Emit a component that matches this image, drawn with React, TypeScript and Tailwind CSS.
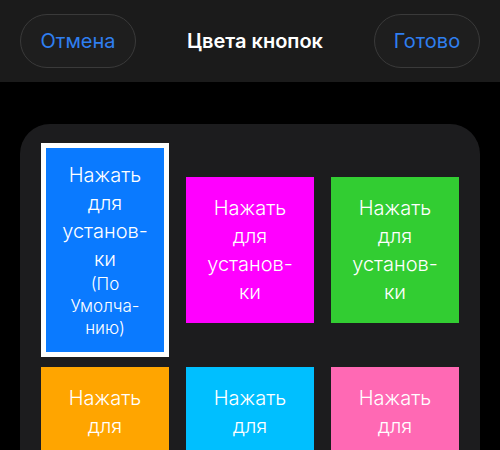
const tiles = [
  { color: 'bg-[#0a7aff]', selected: true },
  { color: 'bg-[#ff00ff]' },
  { color: 'bg-[#32cd32]' },
  { color: 'bg-[#ffa500]' },
  { color: 'bg-[#00bfff]' },
  { color: 'bg-[#ff69b4]' },
];

function Tile({ color, selected }: { color: string; selected?: boolean }) {
  return (
    <button
      className={`${color} ${
        selected ? 'h-[214px] border-[5px] border-white' : 'h-[146px]'
      } w-[128px] flex flex-col items-center justify-center text-white text-center`}
    >
      <span className="text-[20px] leading-[28px] font-light">Нажать</span>
      <span className="text-[20px] leading-[28px] font-light">для</span>
      <span className="text-[20px] leading-[28px] font-light">установ-</span>
      <span className="text-[20px] leading-[28px] font-light">ки</span>
      {selected && (
        <>
          <span className="text-[17px] leading-[22px] font-light">(По</span>
          <span className="text-[17px] leading-[22px] font-light">Умолча-</span>
          <span className="text-[17px] leading-[22px] font-light">нию)</span>
        </>
      )}
    </button>
  );
}

export default function App() {
  return (
    <div className="w-[500px] h-[450px] overflow-hidden bg-black font-['Inter','Noto_Sans',sans-serif]">
      {/* Nav bar */}
      <div className="h-[82px] bg-[#1b1b1b] flex items-center justify-between px-5">
        <button className="h-[54px] w-[116px] rounded-full border border-[#3a3a3a] bg-[#1e1e1e] text-[20px] text-[#2f7ff0]">
          Отмена
        </button>
        <h1 className="text-[20px] font-semibold text-white">Цвета кнопок</h1>
        <button className="h-[54px] w-[106px] rounded-full border border-[#3a3a3a] bg-[#1e1e1e] text-[20px] text-[#2f7ff0]">
          Готово
        </button>
      </div>

      {/* Palette */}
      <div className="mt-[42px] mx-5 rounded-[30px] bg-[#1c1c1e] pt-[19px] pb-6 px-[21px]">
        <div className="grid grid-cols-[128px_128px_128px] gap-x-[17px] gap-y-[10px] items-center">
          {tiles.map((t, i) => (
            <Tile key={i} color={t.color} selected={t.selected} />
          ))}
        </div>
      </div>
    </div>
  );
}
